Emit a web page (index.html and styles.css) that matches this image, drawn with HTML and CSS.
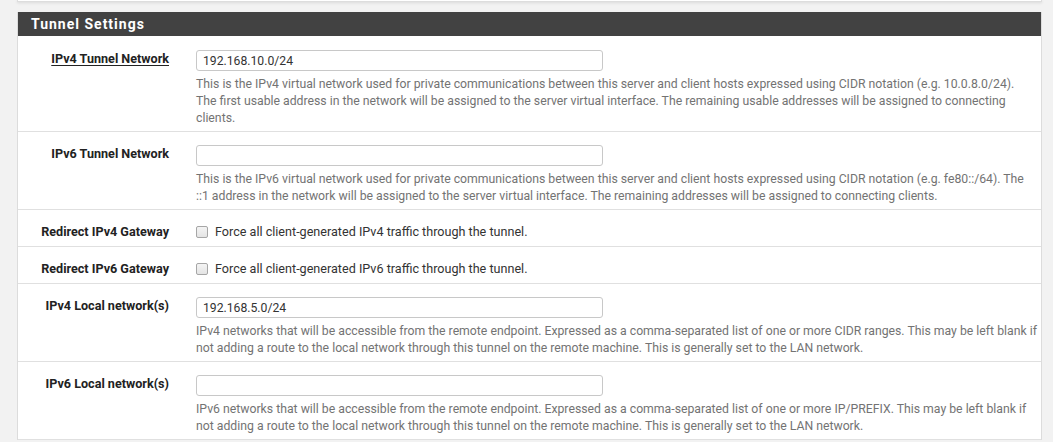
FILE: index.html
```html
<!DOCTYPE html>
<html lang="en">
<head>
    <meta charset="UTF-8">
    <title>Tunnel Settings</title>
    <link rel="stylesheet" href="styles.css">
</head>
<body>
    <div class="page">
        <div class="prev-panel"></div>
        <div class="panel">
            <div class="panel-heading">Tunnel Settings</div>
            <div class="panel-body">
                <div class="form-row">
                    <label class="row-label"><span class="required">IPv4 Tunnel Network</span></label>
                    <div class="row-field">
                        <input type="text" class="text-input" value="192.168.10.0/24">
                        <p class="help">This is the IPv4 virtual network used for private communications between this server and client hosts expressed using CIDR notation (e.g. 10.0.8.0/24). The first usable address in the network will be assigned to the server virtual interface. The remaining usable addresses will be assigned to connecting clients.</p>
                    </div>
                </div>
                <div class="form-row">
                    <label class="row-label">IPv6 Tunnel Network</label>
                    <div class="row-field">
                        <input type="text" class="text-input" value="">
                        <p class="help">This is the IPv6 virtual network used for private communications between this server and client hosts expressed using CIDR notation (e.g. fe80::/64). The ::1 address in the network will be assigned to the server virtual interface. The remaining addresses will be assigned to connecting clients.</p>
                    </div>
                </div>
                <div class="form-row check-row">
                    <label class="row-label">Redirect IPv4 Gateway</label>
                    <div class="row-field">
                        <label class="check"><input type="checkbox"> Force all client-generated IPv4 traffic through the tunnel.</label>
                    </div>
                </div>
                <div class="form-row check-row">
                    <label class="row-label">Redirect IPv6 Gateway</label>
                    <div class="row-field">
                        <label class="check"><input type="checkbox"> Force all client-generated IPv6 traffic through the tunnel.</label>
                    </div>
                </div>
                <div class="form-row">
                    <label class="row-label">IPv4 Local network(s)</label>
                    <div class="row-field">
                        <input type="text" class="text-input" value="192.168.5.0/24">
                        <p class="help">IPv4 networks that will be accessible from the remote endpoint. Expressed as a comma-separated list of one or more CIDR ranges. This may be left blank if not adding a route to the local network through this tunnel on the remote machine. This is generally set to the LAN network.</p>
                    </div>
                </div>
                <div class="form-row">
                    <label class="row-label">IPv6 Local network(s)</label>
                    <div class="row-field">
                        <input type="text" class="text-input" value="">
                        <p class="help">IPv6 networks that will be accessible from the remote endpoint. Expressed as a comma-separated list of one or more IP/PREFIX. This may be left blank if not adding a route to the local network through this tunnel on the remote machine. This is generally set to the LAN network.</p>
                    </div>
                </div>
            </div>
        </div>
    </div>
</body>
</html>
```

FILE: styles.css
```css
* {
    box-sizing: border-box;
    margin: 0;
    padding: 0;
}
body {
    background: #f2f2f2;
    font-family: Roboto, "Liberation Sans", sans-serif;
    font-size: 12px;
    color: #333;
    overflow: hidden;
}
.page {
    padding: 0 11px 0 17px;
}
.prev-panel {
    height: 2px;
    background: #fff;
    border: 1px solid #ddd;
    border-top: none;
    box-shadow: 0 1px 3px rgba(0, 0, 0, 0.12);
    margin-bottom: 10px;
}
.panel {
    background: #fff;
    border-left: 1px solid #dcdcdc;
    border-right: 1px solid #dcdcdc;
}
.panel-heading {
    background: #424242;
    color: #fff;
    font-size: 14px;
    font-weight: bold;
    letter-spacing: 1px;
    height: 24px;
    line-height: 24px;
    padding-left: 13px;
}
.form-row {
    display: grid;
    grid-template-columns: 163px 1fr;
    border-bottom: 1px solid #e0e0e0;
    padding: 13px 0 4px;
}
.form-row:first-child {
    padding-top: 14px;
}
.check-row {
    padding: 13px 0 6px;
}
.row-label {
    text-align: right;
    padding-right: 12px;
    font-size: 12.6px;
    font-weight: bold;
    line-height: 17px;
    color: #222;
}
.required {
    text-decoration: underline;
    text-underline-offset: 2px;
}
.row-field {
    padding-left: 15px;
    padding-right: 4px;
}
.text-input {
    display: block;
    width: 407px;
    height: 21px;
    border: 1px solid #c8c8c8;
    border-radius: 3px;
    padding: 0 6px;
    font-family: Roboto, "Liberation Sans", sans-serif;
    font-size: 12.2px;
    color: #333;
}
.help {
    margin-top: 5px;
    font-size: 12.25px;
    color: #737373;
    line-height: 17px;
}
.check {
    display: flex;
    align-items: center;
    font-size: 12.6px;
    line-height: 17px;
    color: #333;
}
.check input {
    appearance: none;
    width: 12px;
    height: 12px;
    margin: 0 7px 0 0;
    border: 1px solid #a6a6a6;
    border-radius: 2px;
    background: linear-gradient(#f4f4f4, #e4e4e4);
}
```
